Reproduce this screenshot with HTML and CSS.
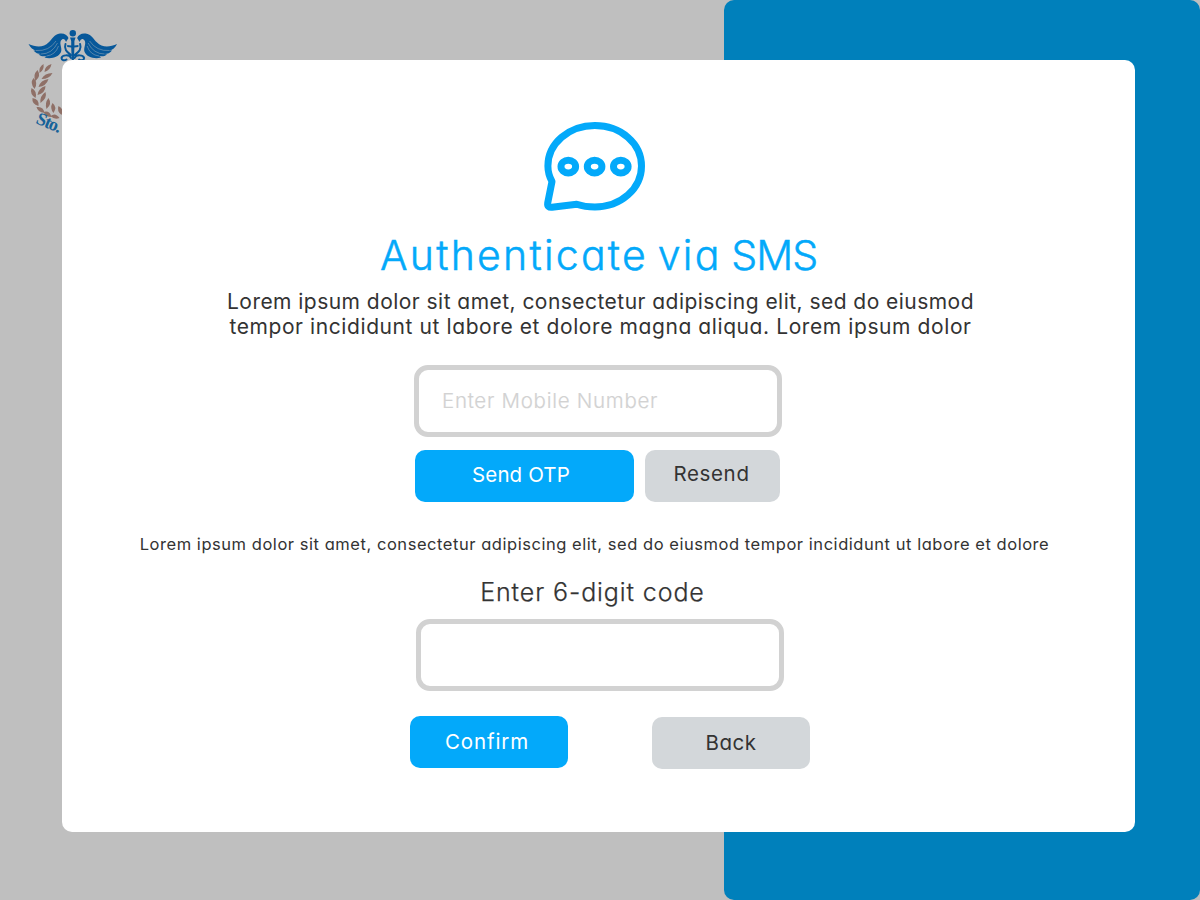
FILE: index.html
```html
<!DOCTYPE html>
<html lang="en">
<head>
<meta charset="utf-8">
<title>Authenticate via SMS</title>
<link rel="stylesheet" href="styles.css">
</head>
<body>
<div class="page">
  <div class="brand">
    <svg class="logo" viewBox="0 0 110 120" width="110" height="120" aria-hidden="true">
      <g fill="#07589a">
        <circle cx="52.8" cy="13.3" r="3.2"/>
        <path d="M50 17.500h5.600l-1.200 3.500v4.500l4-.5v2l-4 .5L53.800 42h-2L51.200 27.500l-4-.5v-2l4 .5V21z"/>
        <path id="wing" d="M48.500 18C47 14.500 44 13 40 13.500C34 14 32.500 19 28.500 22.500C24 27.500 16 27.500 8.500 24C10.500 28 13 29.500 16 30.500L13.500 30.500C15.500 33 18 34 21 34L18.500 34.500C21 36.500 24 36.500 26.500 36L24.500 37.500C31 39.500 39 37 41 32C42.500 28 39 24 41 20.500C42.500 18 45 18.500 46 22Z"/>
        <use href="#wing" transform="matrix(-1 0 0 1 105.600 0)"/>
      </g>
      <g fill="none" stroke="#b1bac1" stroke-width=".45">
        <path id="feathers" d="M16 30.500q13 1 20-9.500M21 34q11 0 16.500-11M26.500 36q9-1 12-10"/>
        <use href="#feathers" transform="matrix(-1 0 0 1 105.600 0)"/>
      </g>
      <g fill="none" stroke="#07589a" stroke-width="2" stroke-linecap="round">
        <path id="snake" d="M45.500 24C43.500 30 48 32.500 51 35M51 38c-1.500-4-9-3-9.500 0 0 2.500 3 3 5 1.500"/>
        <use href="#snake" transform="matrix(-1 0 0 1 105.600 0)"/>
      </g>
      <g fill="#8f7067" transform="translate(1.500 0)">
        <path d="M23 52q0-6 7-8-1 6-7 8zM18 53q-1-6 4-9 1 6-4 9zM20 59q3-6 11-6-3 6-11 6zM14 61q-3-6 2-11 4 6-2 11zM17 67q2-7 10-8-2 7-10 8zM13 69q-5-6-1-11 5 5 1 11zM16 75q1-7 8-9 0 7-8 9zM14 78q-6-4-4-10 6 3 4 10zM19 83q-1-7 5-11 2 6-5 11zM17 86q-7-2-6-8 7 1 6 8zM25 89q-2-6 2-11 4 6-2 11zM23 93q-7-1-8-6 7-1 8 6zM32 93q-4-5-1-10 5 4 1 10zM30 97q-6 0-8-5 6-2 8 5zM40 95q-5-4-3-9 6 3 3 9zM38 98q-5 2-9-2 5-4 9 2z"/>
      </g>
      <text class="logo-text" transform="translate(15 103) rotate(23)" textLength="26">Sto.</text>
    </svg>
  </div>
  <div class="side-panel"></div>
</div>

<main class="modal">
  <svg class="chat-icon" viewBox="0 0 130 110" width="130" height="110" aria-hidden="true">
    <path d="M22 71.500C19.500 67 17.900 61.500 17.900 56C17.900 33.400 38.900 15.500 64.900 15.500S111.500 33.400 111.500 56S90.900 97 64.900 97C58.200 97 52 96 46.700 94.200L22 97.300C19 97.700 17.200 96 17.700 93Z"/>
    <ellipse cx="38.300" cy="56.600" rx="7.300" ry="6.300"/>
    <ellipse cx="64.600" cy="56.600" rx="7.300" ry="6.300"/>
    <ellipse cx="90.800" cy="56.600" rx="7.300" ry="6.300"/>
  </svg>
  <h1 class="title">Authenticate via <span class="title-sms">SMS</span></h1>
  <p class="lead"><span class="lead-first">Lorem ipsum dolor sit amet, consectetur adipiscing elit, sed do eiusmod</span><br><span class="lead-second">tempor incididunt ut labore et dolore magna aliqua. Lorem ipsum dolor</span></p>
  <input class="field field-mobile" type="text" placeholder="Enter Mobile Number" aria-label="Mobile number">
  <div class="otp-actions">
    <button class="btn btn-primary btn-send">Send OTP</button>
    <button class="btn btn-muted btn-resend">Resend</button>
  </div>
  <p class="note">Lorem ipsum dolor sit amet, consectetur adipiscing elit, sed do eiusmod tempor incididunt ut labore et dolore</p>
  <label class="code-label" for="code">Enter 6-digit code</label>
  <input class="field field-code" id="code" type="text">
  <div class="form-actions">
    <button class="btn btn-primary btn-confirm">Confirm</button>
    <button class="btn btn-muted btn-back">Back</button>
  </div>
</main>
</body>
</html>
```
FILE: styles.css
```css
* { box-sizing: border-box; }
body {
  margin: 0;
  width: 1200px;
  height: 900px;
  overflow: hidden;
  position: relative;
  font-family: Inter, "Open Sans", sans-serif;
  font-feature-settings: "cv11" 1;
  color: #333;
}
.page { display: flex; height: 900px; background: #bfbfbf; }
.brand { flex: 1; padding: 20px; }
.logo { display: block; }
.logo-text { font: bold 18px "Liberation Serif", serif; fill: #176299; }
.side-panel { width: 476px; background: #0080bb; border-radius: 10px; }
.modal {
  position: absolute;
  top: 60px;
  left: 62px;
  width: 1073px;
  height: 772px;
  padding-top: 50px;
  background: #fff;
  border-radius: 10px;
  display: flex;
  flex-direction: column;
  align-items: center;
}
.chat-icon { flex: none; margin-right: 7px; fill: none; stroke: #03a9fa; stroke-width: 7; stroke-linejoin: round; }
.title { margin: 9px 0 1px; font-size: 41px; line-height: 52px; font-weight: 300; -webkit-text-stroke: .5px #03a9fa; color: #03a9fa; white-space: nowrap; letter-spacing: 2.250px; word-spacing: -4px; }
.title-sms { letter-spacing: -1px; }
.lead { margin: 7px 0 0 4px; font-size: 21px; line-height: 25px; font-weight: 400; text-align: center; white-space: nowrap; }
.lead-first { letter-spacing: .460px; }
.lead-second { letter-spacing: .590px; }
.field {
  flex: none;
  width: 368px;
  height: 72px;
  border: 5px solid #d2d2d2;
  border-radius: 14px;
  padding: 0 23px 2px;
  background: #fff;
  font: inherit;
  font-size: 20.500px;
  font-feature-settings: inherit;
  letter-spacing: .720px;
  outline: none;
}
.field::placeholder { color: #d2d2d2; opacity: 1; font-weight: 300; -webkit-text-stroke: .2px #d2d2d2; }
.field-mobile { margin: 26px 1px 0 0; }
.otp-actions { display: flex; gap: 11px; margin: 13px 2px 0 0; }
.btn {
  height: 52px;
  border: 0;
  border-radius: 10px;
  padding: 0;
  font: inherit;
  font-size: 20.500px;
  font-feature-settings: inherit;
  white-space: nowrap;
}
.btn-primary { background: #03a9fa; color: #fff; }
.btn-muted { background: #d3d7da; color: #333; }
.btn-send { width: 219px; padding: 0 7px 3px 0; letter-spacing: .120px; }
.btn-resend { width: 135px; padding: 0 2px 5px 0; letter-spacing: .650px; }
.note { margin: 30px 8px 0 0; font-size: 16.500px; line-height: 24px; font-weight: 400; letter-spacing: .545px; white-space: nowrap; }
.code-label { margin: 20px 12px 0 0; font-size: 25px; line-height: 32px; font-weight: 300; -webkit-text-stroke: .25px #333; letter-spacing: .900px; white-space: nowrap; }
.field-code { margin: 11px 0 0 3px; }
.form-actions { display: flex; gap: 84px; margin: 25px 0 0 23px; }
.btn-confirm { width: 158px; padding: 0 4px 2px 0; letter-spacing: .900px; }
.btn-back { width: 158px; margin-top: 1px; padding-bottom: 2px; letter-spacing: .500px; }
```
